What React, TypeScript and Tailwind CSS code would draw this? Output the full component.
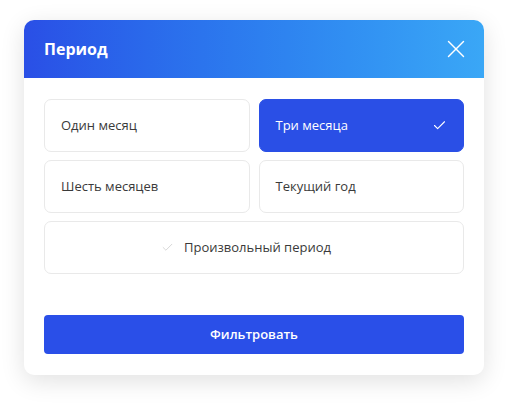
import { X, Check } from 'lucide-react';

const options = [
  { id: 'one', label: 'Один месяц' },
  { id: 'three', label: 'Три месяца' },
  { id: 'six', label: 'Шесть месяцев' },
  { id: 'year', label: 'Текущий год' },
];

export default function App() {
  const selected = 'three';

  return (
    <div className="min-h-[403px] w-[508px] bg-white pt-[20px] pl-[24px]" style={{ fontFamily: '"Open Sans", "Noto Sans", sans-serif' }}>
      <div className="w-[460px] overflow-hidden rounded-[10px] bg-white shadow-[0_6px_24px_rgba(0,0,0,0.12)]">
        <div className="flex h-[58px] items-center justify-between bg-gradient-to-r from-[#2a4fe6] to-[#3aa7f6] pl-[20px] pr-[13px]">
          <h3 className="text-[16px] font-bold text-white">Период</h3>
          <X className="h-[30px] w-[30px] text-white" strokeWidth={1.1} />
        </div>

        <div className="px-[20px] pt-[21px] pb-[21px]">
          <div className="grid grid-cols-2 gap-x-[9px] gap-y-[8px]">
            {options.map((o) => {
              const active = o.id === selected;
              return (
                <div
                  key={o.id}
                  className={`flex h-[53px] items-center justify-between rounded-[7px] border px-[16px] text-[13px] ${
                    active ? 'border-[#2a4fe6] bg-[#2a4fe6] text-white' : 'border-[#e9e9e9] bg-white text-[#3a3a3a]'
                  }`}
                >
                  <span>{o.label}</span>
                  {active && <Check className="h-[15px] w-[15px] text-white" strokeWidth={1.75} />}
                </div>
              );
            })}
            <div className="col-span-2 flex h-[53px] items-center justify-center gap-[10px] rounded-[7px] border border-[#e9e9e9] bg-white pr-[16px] text-[13px] text-[#3a3a3a]">
              <Check className="h-[13px] w-[13px] text-[#cfcfcf]" strokeWidth={1.5} />
              <span>Произвольный период</span>
            </div>
          </div>

          <button className="mt-[41px] flex h-[39px] w-full items-center justify-center rounded-[4px] bg-[#2a4fe8] text-[13px] font-semibold text-white">
            Фильтровать
          </button>
        </div>
      </div>
    </div>
  );
}
